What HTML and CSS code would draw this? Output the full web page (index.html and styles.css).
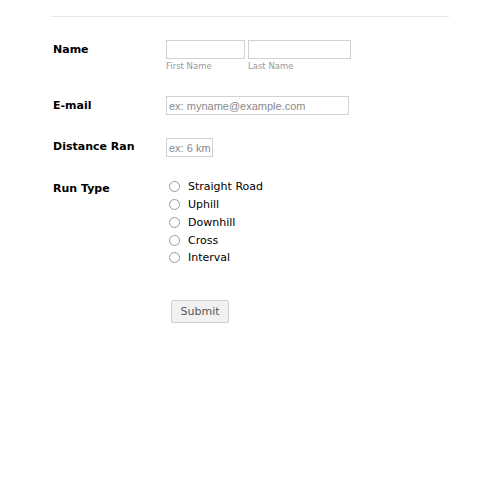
FILE: index.html
```html
<!DOCTYPE html>
<html>
<head>
<meta charset="utf-8">
<link rel="stylesheet" href="styles.css">
</head>
<body>
<div class="form">
  <div class="divider"></div>
  <div class="row row-name">
    <div class="label">Name</div>
    <div class="field">
      <div class="name-part">
        <div class="input first"></div>
        <span class="sub">First Name</span>
      </div>
      <div class="name-part">
        <div class="input last"></div>
        <span class="sub">Last Name</span>
      </div>
    </div>
  </div>
  <div class="row row-email">
    <div class="label">E-mail</div>
    <div class="field">
      <div class="input email"><span class="ph">ex: myname@example.com</span></div>
    </div>
  </div>
  <div class="row row-dist">
    <div class="label">Distance Ran</div>
    <div class="field">
      <div class="input dist"><span class="ph">ex: 6 km</span></div>
    </div>
  </div>
  <div class="row row-type">
    <div class="label">Run Type</div>
    <div class="field radios">
      <div class="radio"><span class="circle"></span><span>Straight Road</span></div>
      <div class="radio"><span class="circle"></span><span>Uphill</span></div>
      <div class="radio"><span class="circle"></span><span>Downhill</span></div>
      <div class="radio"><span class="circle"></span><span>Cross</span></div>
      <div class="radio"><span class="circle"></span><span>Interval</span></div>
    </div>
  </div>
  <div class="row row-submit">
    <div class="label"></div>
    <div class="field">
      <div class="button">Submit</div>
    </div>
  </div>
</div>
</body>
</html>
```
FILE: styles.css
```css
html, body {
  margin: 0;
  padding: 0;
  background: #fff;
}
body {
  width: 500px;
  height: 484px;
  font-family: "DejaVu Sans", Verdana, sans-serif;
  color: #000;
}
.form {
  margin-left: 51px;
  width: 398px;
  padding-top: 16px;
}
.divider {
  height: 1px;
  background: #e6e6e6;
}
.row {
  display: flex;
}
.label {
  width: 113px;
  padding-left: 2px;
  font-weight: bold;
  font-size: 11px;
  line-height: 14px;
}
.field {
  display: flex;
}
.row-name {
  margin-top: 23px;
}
.row-name .label {
  padding-top: 3px;
}
.name-part {
  display: flex;
  flex-direction: column;
  margin-right: 3px;
}
.input {
  box-sizing: border-box;
  height: 19px;
  border: 1px solid #d2d2d2;
  background: #fff;
  display: flex;
  align-items: center;
  padding-left: 2px;
}
.input.first { width: 79px; }
.input.last { width: 103px; }
.sub {
  font-size: 8.5px;
  color: #9a9a9a;
  margin-top: 2px;
  line-height: 11px;
}
.ph {
  font-family: "Liberation Sans", Arial, sans-serif;
  font-size: 11px;
  color: #8a8a8a;
  white-space: nowrap;
}
.row-email {
  margin-top: 24px;
}
.row-email .label {
  padding-top: 3px;
}
.row-dist .label {
  padding-top: 2px;
}
.input.email { width: 183px; }
.row-dist {
  margin-top: 23px;
}
.input.dist { width: 47px; }
.row-type {
  margin-top: 21px;
}
.row-type .label {
  padding-top: 4px;
}
.radios {
  flex-direction: column;
  padding-left: 3px;
}
.radio {
  display: flex;
  align-items: center;
  height: 17.75px;
  font-size: 11px;
}
.circle {
  box-sizing: border-box;
  width: 11px;
  height: 11px;
  border: 1px solid #9a9a9a;
  border-radius: 50%;
  margin-right: 8px;
}
.row-submit {
  margin-top: 33px;
}
.button {
  margin-left: 5px;
  box-sizing: border-box;
  width: 58px;
  height: 23px;
  border: 1px solid #cfcfcf;
  border-radius: 2px;
  background: #f1f1f1;
  font-size: 11px;
  color: #555;
  display: flex;
  align-items: center;
  justify-content: center;
}
```
